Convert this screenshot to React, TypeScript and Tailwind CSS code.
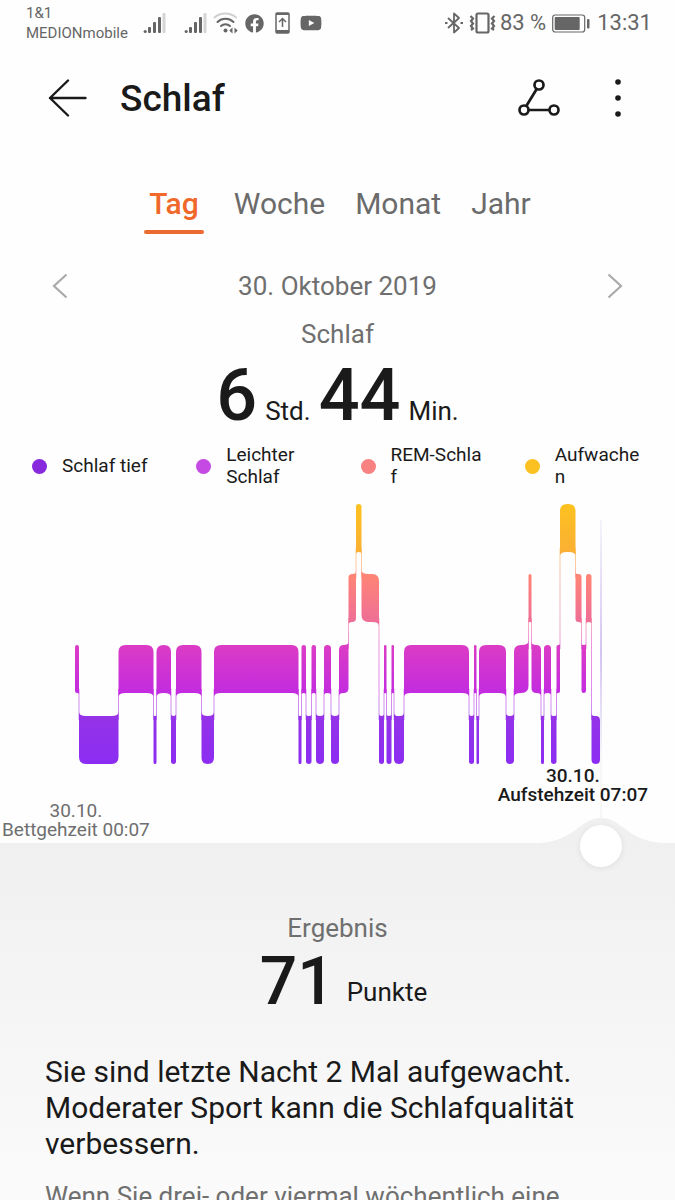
import { useState } from "react";
import { FaFacebook, FaYoutube } from "react-icons/fa";

type Stage = "awake" | "rem" | "light" | "deep";

const STAGE_TOP: Record<Stage, number> = {
   awake: 504,
   rem: 574,
   light: 645,
   deep: 716,
};

const BAR_HEIGHT = 48;

// start position and stage, every phase ends where the next one starts
const PHASES: [number, Stage][] = [
   [75, "light"],
   [79, "deep"],
   [118.5, "light"],
   [153.5, "deep"],
   [156.5, "light"],
   [171, "deep"],
   [176, "light"],
   [201.5, "deep"],
   [214, "light"],
   [298.5, "deep"],
   [301.5, "light"],
   [306, "deep"],
   [311.5, "light"],
   [316, "deep"],
   [324, "light"],
   [331, "deep"],
   [339, "light"],
   [348.5, "rem"],
   [356, "awake"],
   [361.5, "rem"],
   [379, "deep"],
   [384, "light"],
   [386.5, "deep"],
   [391.5, "light"],
   [394, "deep"],
   [404, "light"],
   [469, "deep"],
   [474, "light"],
   [476.5, "deep"],
   [479, "light"],
   [506, "deep"],
   [514, "light"],
   [528.5, "rem"],
   [531.5, "light"],
   [541, "deep"],
   [544, "light"],
   [551, "deep"],
   [556.5, "light"],
   [560, "awake"],
   [575.5, "rem"],
   [581.5, "light"],
   [586, "rem"],
   [591.5, "deep"],
];

const SLEEP_END = 600;

const LEGEND = [
   { label: "Schlaf tief", color: "bg-[#8729dc]" },
   { label: "Leichter Schlaf", color: "bg-[#c549e3]" },
   { label: "REM-\u2060Schlaf", color: "bg-[#f88282]" },
   { label: "Aufwachen", color: "bg-[#fbc122]" },
];

const TABS = ["Tag", "Woche", "Monat", "Jahr"];

function barPath(index: number) {
   const [x0, stage] = PHASES[index];
   const x1 = PHASES[index + 1]?.[0] ?? SLEEP_END;
   const top = STAGE_TOP[stage];
   const bottom = top + BAR_HEIGHT;
   const prev = PHASES[index - 1];
   const next = PHASES[index + 1];
   const r = Math.min(7, (x1 - x0) / 2);
   const flare = Math.min(4, (x1 - x0) / 3);

   // corners flare out towards the neighbour and are rounded on the other side
   const leftUp = prev && STAGE_TOP[prev[1]] < top;
   const leftDown = prev && STAGE_TOP[prev[1]] > top;
   const rightUp = next && STAGE_TOP[next[1]] < top;
   const rightDown = next && STAGE_TOP[next[1]] > top;

   const tl = leftUp ? top - flare : top + r;
   const tr = rightUp ? top - flare : top + r;
   const bl = leftDown ? bottom + flare : bottom - r;
   const br = rightDown ? bottom + flare : bottom - r;

   return [
      `M${x0} ${tl}`,
      `Q${x0} ${top} ${x0 + r} ${top}`,
      `L${x1 - r} ${top}`,
      `Q${x1} ${top} ${x1} ${tr}`,
      `L${x1} ${br}`,
      `Q${x1} ${bottom} ${x1 - r} ${bottom}`,
      `L${x0 + r} ${bottom}`,
      `Q${x0} ${bottom} ${x0} ${bl}`,
      "Z",
   ].join(" ");
}

function SignalIcon() {
   return (
      <svg className="w-[23px] h-[21px]" viewBox="0 0 23 21" fill="#666">
         <circle cx="2.2" cy="18.5" r="1.6" />
         <rect x="5" y="14" width="3" height="6" rx="1" />
         <rect x="10" y="9" width="3" height="11" rx="1" />
         <rect x="15" y="4" width="3" height="16" rx="1" />
         <rect x="19.5" y="0" width="3" height="20" rx="1" fill="#d5d5d5" />
      </svg>
   );
}

function StatusBar() {
   return (
      <div className="flex items-center justify-between shrink-0 h-[46px] pl-[26px] pr-[23px] text-[#666]">
         <div className="flex items-center">
            <div className="text-[15px] leading-[20px]">
               1&1
               <br />
               MEDIONmobile
            </div>
            <div className="flex items-center ml-[15px]">
               <SignalIcon />
               <div className="ml-[18px]">
                  <SignalIcon />
               </div>
               <svg className="w-[26px] h-[22px] ml-[6px]" viewBox="0 0 26 22" fill="none" strokeWidth="2" strokeLinecap="round">
                  <path d="M1.5 5.5C7.5 .3 17 .3 23 5.5" stroke="#d0d0d0" />
                  <path d="M4.5 10C9 5.8 16 5.8 20.5 10" stroke="#666" />
                  <path d="M8 14C10.5 11.6 14.5 11.6 17 14" stroke="#666" />
                  <circle cx="12.5" cy="18.5" r="2" fill="#666" />
                  <path d="M19.5 15.5V21.5L16.3 18.5ZM21.5 15.5V21.5L24.7 18.5Z" fill="#666" />
               </svg>
               <FaFacebook className="size-[19px] ml-[6px]" />
               <svg className="w-[15px] h-[22px] ml-[11px]" viewBox="0 0 15 22" fill="none" stroke="#666" strokeWidth="1.5">
                  <rect x="1" y="1" width="13" height="20" rx="1" />
                  <path d="M1 19.5H14" strokeWidth="3" />
                  <path d="M1 2H14" strokeWidth="2" />
                  <path d="M7.5 15V7M4 10L7.5 6.5L11 10" />
               </svg>
               <FaYoutube className="size-[22px] ml-[10px]" />
            </div>
         </div>
         <div className="flex items-center text-[22px] leading-[24px]">
            <svg className="w-[18px] h-[22px] mr-[6px]" viewBox="0 0 18 22" fill="none" stroke="#666" strokeWidth="1.8">
               <path d="M3 6L14 16L9 20.5V1.5L14 6L3 16" strokeLinejoin="round" />
               <path d="M0 11H2.5M15.5 11H18" strokeWidth="2" />
            </svg>
            <svg className="w-[27px] h-[22px] mr-[4px]" viewBox="0 0 27 22" fill="none" stroke="#666" strokeWidth="2.2">
               <rect x="7.5" y="1.5" width="12" height="19" rx="1.5" />
               <path d="M1.5 4L4 6.5L2 9L4 11.5L2 14L4 16.5L2 18" />
               <path d="M25.5 4L23 6.5L25 9L23 11.5L25 14L23 16.5L25 18" />
            </svg>
            <span>83 %</span>
            <svg className="w-[38px] h-[19px] ml-[6px] mr-[7px]" viewBox="0 0 38 19">
               <rect x=".7" y="1" width="32" height="17" rx="2.5" fill="none" stroke="#666" strokeWidth="1.2" />
               <rect x="2.7" y="3" width="25" height="13" rx="1" fill="#666" />
               <rect x="35" y="5" width="2.5" height="9.5" rx="1" fill="#666" />
            </svg>
            <span>13:31</span>
         </div>
      </div>
   );
}

function Header() {
   return (
      <header className="flex items-center shrink-0 h-[104px] pl-[48px] pr-[49px]">
         <button aria-label="Zurück">
            <svg className="w-[40px] h-[38px]" viewBox="0 0 40 38" fill="none" stroke="#1a1a1a" strokeWidth="2.4" strokeLinecap="round" strokeLinejoin="round">
               <path d="M20 1.5L2 19L20 36.5M2 19H37.5" />
            </svg>
         </button>
         <h1 className="ml-8 pt-[2px] text-[37px] leading-[44px] font-medium">Schlaf</h1>
         <button aria-label="Teilen" className="ml-auto">
            <svg className="w-[42px] h-[38px]" viewBox="0 0 42 38" fill="none" stroke="#1a1a1a" strokeWidth="2.7">
               <circle cx="21" cy="6" r="4.5" />
               <circle cx="6" cy="31" r="4.5" />
               <circle cx="36" cy="31" r="4.5" />
               <path d="M18.7 10L8.3 27M10.5 31H31.5" />
            </svg>
         </button>
         <button aria-label="Mehr" className="ml-[50px]">
            <svg className="w-[16px] h-[38px]" viewBox="0 0 16 38" fill="#1a1a1a">
               <circle cx="8" cy="3" r="2.8" />
               <circle cx="8" cy="19" r="2.8" />
               <circle cx="8" cy="35" r="2.8" />
            </svg>
         </button>
      </header>
   );
}

function SleepChart() {
   return (
      <svg className="block w-full" viewBox="0 488 675 278" role="img" aria-label="Schlafphasen">
         <defs>
            <linearGradient id="stages" gradientUnits="userSpaceOnUse" x1="0" y1="504" x2="0" y2="764">
               <stop offset="0" stopColor="#fcc220" />
               <stop offset=".18" stopColor="#fbb033" />
               <stop offset=".27" stopColor="#ff8574" />
               <stop offset=".46" stopColor="#ee6d98" />
               <stop offset=".54" stopColor="#dc3cc4" />
               <stop offset=".73" stopColor="#c22be0" />
               <stop offset=".82" stopColor="#9533e8" />
               <stop offset="1" stopColor="#8b2df2" />
            </linearGradient>
         </defs>
         {PHASES.map(([x, stage], index) => {
            const prev = PHASES[index - 1];
            if (!prev) return null;
            const a = Math.min(STAGE_TOP[stage], STAGE_TOP[prev[1]]) + BAR_HEIGHT - 4;
            const b = Math.max(STAGE_TOP[stage], STAGE_TOP[prev[1]]) + 4;
            return (
               <rect key={x} x={x - 0.5} y={a} width="1" height={b - a} fill="url(#stages)" opacity=".55" />
            );
         })}
         {PHASES.map(([x], index) => (
            <path key={x} d={barPath(index)} fill="url(#stages)" />
         ))}
      </svg>
   );
}

function Timeline() {
   const [position, setPosition] = useState(916);
   const left = `calc(21px + (100% - 42px) * ${position / 1000})`;

   return (
      <section className="relative shrink-0 pb-1">
         <div
            className="absolute top-8 bottom-6 w-px -translate-x-1/2 bg-linear-to-b from-[#ece8f4] via-[#a98ae6] via-45% to-[#f0f0f0] to-80%"
            style={{ left }}
         />
         <SleepChart />
         <div className="relative flex items-start justify-between pl-[2px] pr-[27px] text-[19px] leading-[19px] text-center">
            <p className="mt-[35px] text-[#6f6f6f]">
               30.10.
               <br />
               Bettgehzeit 00:07
            </p>
            <p className="font-medium">
               30.10.
               <br />
               Aufstehzeit 07:07
            </p>
         </div>
         <svg className="absolute bottom-0 w-[126px] h-[26px] -translate-x-1/2" style={{ left }} viewBox="0 0 126 26">
            <path d="M0 26C36 25 42 1 63 1C84 1 90 25 126 26Z" fill="#f0f0f0" />
         </svg>
         <input
            type="range"
            aria-label="Uhrzeit"
            min={0}
            max={1000}
            value={position}
            onChange={(e) => setPosition(Number(e.target.value))}
            className="absolute left-0 -bottom-6 w-full h-[42px] appearance-none bg-transparent [&::-webkit-slider-thumb]:appearance-none [&::-webkit-slider-thumb]:size-[42px] [&::-webkit-slider-thumb]:rounded-full [&::-webkit-slider-thumb]:bg-white [&::-webkit-slider-thumb]:shadow-[0_1px_6px_rgba(0,0,0,0.08)]"
         />
      </section>
   );
}

export default function App() {
   const [tab, setTab] = useState("Tag");

   return (
      <div className="flex flex-col h-screen overflow-hidden bg-[#fefefe] text-[#1a1a1a] font-[Roboto,sans-serif]">
         <StatusBar />
         <Header />

         <nav className="flex justify-center shrink-0 gap-[30px] pt-9 text-[30px] leading-[36px]">
            {TABS.map((name) => (
               <button
                  key={name}
                  onClick={() => setTab(name)}
                  className={
                     name === tab
                        ? "flex flex-col items-center font-medium text-[#f0692b]"
                        : "flex flex-col items-center text-[#6b6b6b]"
                  }
               >
                  <span className={name === tab ? "px-[5px]" : ""}>{name}</span>
                  {name === tab && <span className="w-full h-1 mt-2 rounded-full bg-[#ea6a30]" />}
               </button>
            ))}
         </nav>

         <div className="flex items-center justify-between shrink-0 px-[52px] pt-[34px] text-[26px] leading-[36px] text-[#6f6f6f]">
            <button aria-label="Vorheriger Tag">
               <svg className="w-[16px] h-[26px]" viewBox="0 0 16 26" fill="none" stroke="#aaa" strokeWidth="2.2">
                  <path d="M14.5 1.5L2 13L14.5 24.5" />
               </svg>
            </button>
            <span>30. Oktober 2019</span>
            <button aria-label="Nächster Tag">
               <svg className="w-[16px] h-[26px]" viewBox="0 0 16 26" fill="none" stroke="#aaa" strokeWidth="2.2">
                  <path d="M1.5 1.5L14 13L1.5 24.5" />
               </svg>
            </button>
         </div>

         <h2 className="mt-3 text-[26px] leading-[36px] text-center text-[#6f6f6f]">Schlaf</h2>
         <p className="flex items-baseline justify-center gap-2 mt-2 text-[26px] leading-[36px]">
            <span className="text-[72px] leading-[72px] font-medium">6</span>
            <span>Std.</span>
            <span className="text-[72px] leading-[72px] font-medium">44</span>
            <span>Min.</span>
         </p>

         <ul className="grid grid-cols-4 shrink-0 gap-[42px] pl-8 pr-7 mt-3 text-[19px] leading-[22px]">
            {LEGEND.map(({ label, color }) => (
               <li key={label} className="flex items-center gap-[15px]">
                  <span className={`size-[15px] shrink-0 rounded-full ${color}`} />
                  <span className="min-w-0 wrap-anywhere">{label}</span>
               </li>
            ))}
         </ul>

         <Timeline />

         <section className="flex-1 pt-[67px] px-[45px] bg-linear-to-b from-[#f0f0f0] to-[#fbfbfb]">
            <h2 className="text-[26px] leading-[36px] text-center text-[#6f6f6f]">Ergebnis</h2>
            <p className="flex items-end justify-center gap-3 pl-3 text-[26px] leading-[36px]">
               <span className="text-[66px] leading-[72px] font-medium">71</span>
               <span className="pb-2">Punkte</span>
            </p>
            <p className="mt-9 text-[30px] leading-[36px]">
               Sie sind letzte Nacht 2 Mal aufgewacht. Moderater Sport kann die Schlafqualität verbessern.
            </p>
            <p className="mt-4 text-[26px] leading-[36px] text-[#6f6f6f]">
               Wenn Sie drei- oder viermal wöchentlich eine
            </p>
         </section>
      </div>
   );
}
